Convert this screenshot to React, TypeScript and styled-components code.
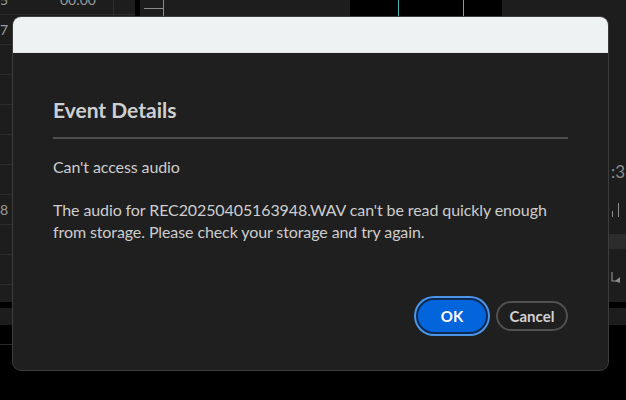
import React from 'react';
import styled, { createGlobalStyle } from 'styled-components';

const GlobalStyle = createGlobalStyle`
  html, body {
    margin: 0;
    padding: 0;
    background: #000;
  }
  * {
    box-sizing: border-box;
  }
`;

const Page = styled.div`
  position: relative;
  width: 626px;
  height: 400px;
  overflow: hidden;
  background: #000;
  display: flex;
  flex-direction: column;
  font-family: Lato, 'Open Sans', sans-serif;
`;

const Workspace = styled.div`
  height: 302px;
  display: flex;
  background: #1d1d1d;
`;

const TablePanel = styled.div`
  width: 135px;
  display: flex;
  flex-direction: column;
  margin-top: -15px;
`;

const TableRow = styled.div`
  height: 30px;
  flex-shrink: 0;
  display: flex;
  align-items: center;
  border-bottom: 1px solid #2b2b2b;
  font-size: 14px;
  color: #9b9b9b;
`;

const NumberCell = styled.div`
  width: 38px;
`;

const TimeCell = styled.div`
  width: 76px;
  height: 100%;
  display: flex;
  align-items: center;
  padding-left: 22px;
  overflow: hidden;
  white-space: nowrap;
  border-right: 1px solid #2d2d2d;
`;

const PanelGap = styled.div`
  width: 5px;
  background: #000;
`;

const TimelinePanel = styled.div`
  width: 210px;
  display: flex;
  padding-left: 4px;
`;

const Playhead = styled.div`
  width: 20px;
  height: 16px;
  border-right: 1px solid #8a8a8a;
  display: flex;
  align-items: center;
  &::before {
    content: '';
    display: block;
    width: 100%;
    height: 1px;
    background: #8a8a8a;
  }
`;

const Monitor = styled.div`
  position: relative;
  width: 152px;
  background: #000;
`;

const Guide = styled.div<{ left: number }>`
  position: absolute;
  top: 0;
  bottom: 0;
  left: ${(props) => props.left}px;
  width: 1px;
  background: #4fb3b8;
`;

const SidePanel = styled.div`
  flex: 1;
  display: flex;
  flex-direction: column;
  align-items: flex-end;
  padding-top: 161px;
`;

const SideTime = styled.div`
  width: 15px;
  font-size: 17px;
  color: #8c8c8c;
  white-space: nowrap;
  overflow: hidden;
  line-height: 22px;
`;

const SideTicks = styled.div`
  width: 17px;
  height: 18px;
  margin-top: 16px;
  display: flex;
  align-items: flex-end;
  gap: 5px;
  padding-left: 3px;
  &::before,
  &::after {
    content: '';
    display: block;
    width: 1px;
    background: #8c8c8c;
  }
  &::before {
    height: 6px;
  }
  &::after {
    height: 14px;
  }
`;

const SideBand = styled.div`
  width: 100%;
  height: 15px;
  margin-top: 17px;
  background: #2c2c2c;
`;

const SideIcon = styled.div`
  width: 17px;
  margin-top: 18px;
  padding-left: 2px;
`;

const Rule = styled.div`
  height: 6px;
  background: #000;
`;

const LowerBand = styled.div`
  height: 17px;
  background: #1d1d1d;
`;

const Dialog = styled.div`
  position: absolute;
  left: 12px;
  top: 16px;
  width: 597px;
  height: 355px;
  border-radius: 9px;
  border: 1px solid #3c3c3c;
  background: #1f1f1f;
  overflow: hidden;
  display: flex;
  flex-direction: column;
`;

const TitleBar = styled.div`
  height: 36px;
  flex-shrink: 0;
  background: #eef2f3;
  border-bottom: 1px solid #dfe3e5;
`;

const Body = styled.div`
  flex: 1;
  display: flex;
  flex-direction: column;
  padding: 44px 40px 34px;
`;

const Heading = styled.h2`
  margin: 0;
  font-size: 21px;
  line-height: 26px;
  font-weight: 700;
  color: #cfcfcf;
`;

const Divider = styled.hr`
  margin: 14px 0 0;
  border: none;
  height: 2px;
  background: #4e4e4e;
`;

const Text = styled.p<{ gap: number }>`
  margin: ${(props) => props.gap}px 0 0;
  font-size: 16px;
  letter-spacing: -0.1px;
  line-height: 22px;
  color: #cdcdcd;
`;

const Actions = styled.div`
  margin-top: auto;
  display: flex;
  justify-content: flex-end;
  align-items: center;
  gap: 6px;
`;

const Button = styled.button<{ primary?: boolean }>`
  display: flex;
  align-items: center;
  justify-content: center;
  border-radius: 20px;
  font-family: Lato, 'Open Sans', sans-serif;
  font-size: 15px;
  font-weight: 700;
  cursor: pointer;
  ${(props) =>
    props.primary
      ? `
    width: 72px;
    height: 36px;
    margin: 2px;
    color: #fff;
    background: #0265dc;
    border: 2px solid #0d2a55;
    box-shadow: 0 0 0 2px #4b95e8;
  `
      : `
    width: 72px;
    height: 30px;
    color: #d2d2d2;
    background: #1f1f1f;
    border: 2px solid #505050;
  `}
`;

const rows = ['5', '7', '', '', '', '', '', '8', '', '', '', ''];

const App = () => {
  return (
    <>
      <GlobalStyle />
      <Page>
        <Workspace>
          <TablePanel>
            {rows.map((n, i) => (
              <TableRow key={i}>
                <NumberCell>{n}</NumberCell>
                <TimeCell>{i === 0 ? '00:00' : ''}</TimeCell>
              </TableRow>
            ))}
          </TablePanel>
          <PanelGap />
          <TimelinePanel>
            <Playhead />
          </TimelinePanel>
          <Monitor>
            <Guide left={48} />
            <Guide left={113} />
          </Monitor>
          <SidePanel>
            <SideTime>:3</SideTime>
            <SideTicks />
            <SideBand />
            <SideIcon>
              <svg width="10" height="12" viewBox="0 0 10 12">
                <path d="M1 1v9h8" fill="none" stroke="#8c8c8c" strokeWidth="1.2" />
                <path d="M4 10l5-4v6z" fill="#8c8c8c" />
              </svg>
            </SideIcon>
          </SidePanel>
        </Workspace>
        <Rule />
        <LowerBand />
        <Dialog>
          <TitleBar />
          <Body>
            <Heading>Event Details</Heading>
            <Divider />
            <Text gap={17}>Can't access audio</Text>
            <Text gap={21}>
              The audio for REC20250405163948.WAV can't be read quickly enough
              <br />
              from storage. Please check your storage and try again.
            </Text>
            <Actions>
              <Button primary>OK</Button>
              <Button>Cancel</Button>
            </Actions>
          </Body>
        </Dialog>
      </Page>
    </>
  );
};

export default App;
